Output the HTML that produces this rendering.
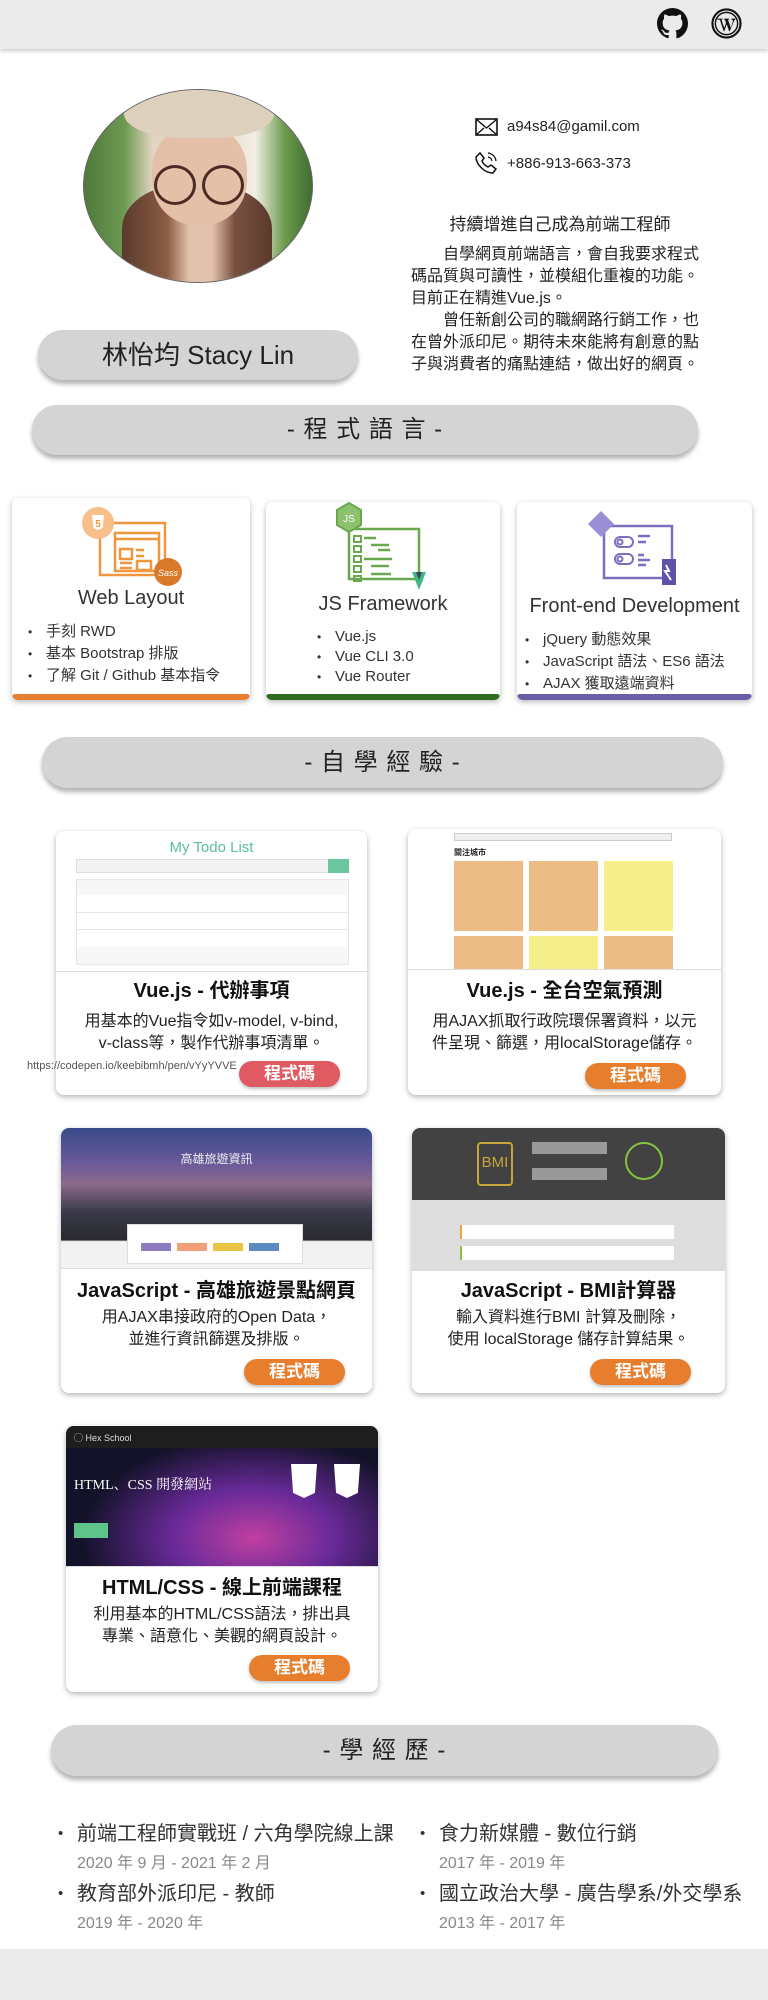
<!DOCTYPE html>
<html><head><meta charset="utf-8">
<style>
*{margin:0;padding:0;box-sizing:border-box}
body{width:768px;height:2000px;position:relative;background:#fff;font-family:"Liberation Sans","Noto Sans CJK TC",sans-serif;color:#222;overflow:hidden}
.a{position:absolute}
.pill{position:absolute;background:#d4d4d4;border-radius:30px;box-shadow:0 4px 5px rgba(0,0,0,.3);text-align:center;color:#222}
.card{position:absolute;background:#fff;border-radius:6px;box-shadow:0 2px 6px rgba(0,0,0,.28);overflow:hidden}
.bar{position:absolute;left:0;right:0;bottom:0;height:6px;border-radius:3px}
ul.l{position:absolute;list-style:none;font-size:15px;line-height:22px;color:#333}
ul.l li:before{content:"•";display:inline-block;width:18px;font-size:12px}
.pc{position:absolute;background:#fff;border-radius:8px;box-shadow:0 2px 6px rgba(0,0,0,.3);overflow:hidden;text-align:center}
.pc .im{position:absolute;left:0;right:0;top:0;border-bottom:1px solid #ddd;overflow:hidden}
.pc h3{position:absolute;left:0;right:0;font-size:20px;font-weight:bold;color:#111;line-height:24px;white-space:nowrap}
.pc p{position:absolute;left:0;right:0;font-size:16px;line-height:22px;color:#222;white-space:nowrap}
.btn{position:absolute;height:26px;width:101px;border-radius:13px;background:#e67e2e;color:#fff;font-size:17px;line-height:26px;text-align:center;font-weight:bold;box-shadow:0 2px 3px rgba(0,0,0,.25)}
.edu{position:absolute;font-size:20px;color:#333;line-height:24px;white-space:nowrap}
.edu span{display:block;font-size:16px;color:#888;margin-top:6px}
.edu:before{content:"•";position:absolute;left:-19px;font-size:15px}
</style></head><body>
<div class="a" style="left:0;top:0;width:768px;height:49px;background:#ebebeb;box-shadow:0 2px 4px rgba(0,0,0,.2)"></div>
<svg class="a" style="left:657px;top:8px" width="31" height="31" viewBox="0 0 16 16"><path fill="#111" d="M8 0C3.58 0 0 3.58 0 8c0 3.54 2.29 6.530 5.47 7.59.4.07.55-.17.55-.38v-1.33c-2.23.48-2.7-1.07-2.7-1.07-.36-.92-.89-1.17-.89-1.17-.73-.5.05-.49.05-.49.81.06 1.23.83 1.23.83.72 1.23 1.88.87 2.34.67.07-.52.28-.87.51-1.07-1.780-.2-3.64-.89-3.640-3.95 0-.87.31-1.59.82-2.15-.08-.2-.36-1.02.08-2.12 0 0 .67-.21 2.2.82a7.6 7.6 0 014 0c1.53-1.04 2.2-.82 2.2-.82.44 1.1.16 1.92.08 2.12.51.56.82 1.27.82 2.15 0 3.07-1.87 3.75-3.65 3.95.29.25.54.73.54 1.48v2.2c0 .21.15.46.55.38A8 8 0 0016 8c0-4.420-3.58-8-8-8z"/></svg>
<svg class="a" style="left:711px;top:8px" width="31" height="31" viewBox="0 0 32 32"><circle cx="16" cy="16" r="14.5" fill="none" stroke="#111" stroke-width="2.2"/><circle cx="16" cy="16" r="11.5" fill="none" stroke="#111" stroke-width="1.5"/><path fill="#111" d="M6.5 11h5.5v1h-1.3l3 8.5 1.8-5.2-1.1-3.3h-1v-1h5.4v1h-1.3l3 8.5 2-6.5c.5-1.8-.8-2.1-1.4-2.1V11h4v1c-.6.1-1.1.7-1.5 1.8L19.3 24h-.6l-2.5-7.2L13.7 24h-.6L9.2 12.2 8 12h-1.5z"/></svg>

<div class="a" style="left:83px;top:89px;width:230px;height:194px;border-radius:50%;overflow:hidden;border:1px solid #666;background:linear-gradient(90deg,#4d7a3a 0,#6e9a52 18%,#e0d5c0 30%,#e8dccb 60%,#f3efe6 75%,#6c9a4c 88%,#3f6e32 100%)">
 <div class="a" style="left:38px;top:95px;width:150px;height:110px;border-radius:40% 40% 10% 10%;background:linear-gradient(90deg,#5a3a2c,#8a5c44 30%,#e3c2ad 45%,#e3c2ad 60%,#7a5040 75%,#5a3a2c)"></div>
 <div class="a" style="left:68px;top:35px;width:95px;height:100px;border-radius:45%;background:#e4c0a8"></div>
 <div class="a" style="left:70px;top:75px;width:42px;height:40px;border-radius:50%;border:3px solid #4b2a22"></div>
 <div class="a" style="left:118px;top:75px;width:42px;height:40px;border-radius:50%;border:3px solid #4b2a22"></div>
 <div class="a" style="left:40px;top:-12px;width:150px;height:60px;border-radius:40%;background:#ddd0bc"></div>
</div>
<div class="pill" style="left:38px;top:330px;width:320px;height:50px;font-size:26px;line-height:50px;border-radius:25px">林怡均 Stacy Lin</div>

<svg class="a" style="left:475px;top:117px" width="23" height="20" viewBox="0 0 23 20"><rect x="1" y="2" width="21" height="16" fill="none" stroke="#111" stroke-width="1.6"/><path d="M1 2l10.5 9L22 2M1 18l8-7M22 18l-8-7" fill="none" stroke="#111" stroke-width="1.4"/></svg>
<div class="a" style="left:507px;top:118px;font-size:15px;color:#222">a94s84@gamil.com</div>
<svg class="a" style="left:474px;top:151px" width="24" height="24" viewBox="0 0 24 24"><path d="M6 2l4 5-2 3c1 2.5 3 4.5 6 6l3-2 5 4-3 4C10 22 2 13 2 6z" fill="none" stroke="#111" stroke-width="1.5"/><path d="M14 6a5 5 0 014 4M14 2a9 9 0 018 8" fill="none" stroke="#111" stroke-width="1.3"/></svg>
<div class="a" style="left:507px;top:155px;font-size:15px;color:#222">+886-913-663-373</div>
<div class="a" style="left:412px;top:210px;width:296px;text-align:center;font-size:17px;color:#222">持續增進自己成為前端工程師</div>
<div class="a" style="left:411px;top:244px;width:300px;font-size:16px;line-height:22px;color:#222;white-space:nowrap">
<div style="text-indent:2em">自學網頁前端語言，會自我要求程式<br>碼品質與可讀性，並模組化重複的功能。<br>目前正在精進Vue.js。</div>
<div style="text-indent:2em">曾任新創公司的職網路行銷工作，也<br>在曾外派印尼。期待未來能將有創意的點<br>子與消費者的痛點連結，做出好的網頁。</div>
</div>

<div class="pill" style="left:32px;top:405px;width:666px;height:50px;font-size:24px;line-height:50px;letter-spacing:1px">- 程 式 語 言 -</div>

<div class="card" style="left:12px;top:498px;width:238px;height:202px"><div class="bar" style="background:#e67e33"></div></div>
<div class="card" style="left:266px;top:502px;width:234px;height:198px"><div class="bar" style="background:#2e6b1e"></div></div>
<div class="card" style="left:517px;top:502px;width:235px;height:198px"><div class="bar" style="background:#6a5fa6"></div></div>

<svg class="a" style="left:81px;top:505px" width="102" height="84" viewBox="0 0 102 82"><rect x="19" y="17" width="65" height="52" fill="#fff" stroke="#f0973e" stroke-width="2.5"/><rect x="34" y="27" width="44" height="38" fill="none" stroke="#f0973e" stroke-width="2.5"/><line x1="34" y1="33" x2="78" y2="33" stroke="#f0973e" stroke-width="2.5"/><rect x="39" y="43" width="12" height="10" fill="none" stroke="#f0973e" stroke-width="2.5"/><path d="M55 44h8M55 50h8M39 57h12M39 62h12" stroke="#f0973e" stroke-width="2.5"/><rect x="56" y="55" width="14" height="9" fill="none" stroke="#f0973e" stroke-width="2.5"/><circle cx="17" cy="17" r="16" fill="#f7c08a"/><path d="M11 9h12l-1.5 13L17 24l-4.5-2z" fill="#fff"/><text x="17" y="21" font-size="10" text-anchor="middle" fill="#f0973e" font-weight="bold">5</text><circle cx="87" cy="66" r="14" fill="#d87a2a"/><text x="87" y="70" font-size="9" text-anchor="middle" fill="#fff" font-style="italic">Sass</text></svg>
<svg class="a" style="left:333px;top:502px" width="100" height="90" viewBox="0 0 100 90"><rect x="16" y="27" width="70" height="50" fill="#fff" stroke="#6aa84f" stroke-width="2.5"/><g stroke="#6aa84f" stroke-width="2" fill="none"><rect x="21" y="34" width="7" height="6"/><rect x="21" y="44" width="7" height="6"/><rect x="21" y="54" width="7" height="6"/><rect x="21" y="64" width="7" height="6"/><rect x="21" y="74" width="7" height="5"/></g><path d="M31 36h12M38 43h18M45 48h12M31 57h28M38 64h18M38 72h20" stroke="#6aa84f" stroke-width="2.5"/><path d="M4 8l12-7 12 7v15l-12 7-12-7z" fill="#8cc26e" stroke="#6aa84f" stroke-width="2"/><text x="16" y="20" font-size="10" text-anchor="middle" fill="#fff">JS</text><path d="M79 70h14l-7 18z" fill="#41b883"/><path d="M83 70h6l-3 8z" fill="#35495e"/></svg>
<svg class="a" style="left:586px;top:510px" width="100" height="78" viewBox="0 0 100 78"><rect x="18" y="16" width="68" height="52" fill="#fff" stroke="#7b6fc0" stroke-width="2.5"/><path d="M2 14l13-13 13 13-13 13z" fill="#9a8fd6"/><g fill="none" stroke="#7b6fc0" stroke-width="2"><rect x="29" y="27" width="18" height="10" rx="5"/><circle cx="34" cy="32" r="2.5"/><rect x="29" y="44" width="18" height="10" rx="5"/><circle cx="34" cy="49" r="2.5"/></g><path d="M52 26h12M52 32h8M52 45h6M52 50h12M52 55h8" stroke="#7b6fc0" stroke-width="2.5"/><rect x="76" y="49" width="14" height="26" fill="#5f52a8"/><path d="M80 55l3 6h-4l6 9" stroke="#fff" stroke-width="2" fill="none"/></svg>

<div class="a" style="left:12px;top:587px;width:238px;text-align:center;font-size:20px;color:#333">Web Layout</div>
<div class="a" style="left:266px;top:593px;width:234px;text-align:center;font-size:20px;color:#333">JS Framework</div>
<div class="a" style="left:517px;top:595px;width:235px;text-align:center;font-size:20px;color:#333">Front-end Development</div>
<ul class="l" style="left:28px;top:621px"><li>手刻 RWD</li><li>基本 Bootstrap 排版</li><li>了解 Git / Github 基本指令</li></ul>
<ul class="l" style="left:317px;top:627px;line-height:19px"><li>Vue.js</li><li>Vue CLI 3.0</li><li>Vue Router</li></ul>
<ul class="l" style="left:525px;top:629px"><li>jQuery 動態效果</li><li>JavaScript 語法、ES6 語法</li><li>AJAX 獲取遠端資料</li></ul>

<div class="pill" style="left:42px;top:737px;width:681px;height:51px;font-size:24px;line-height:51px;letter-spacing:1px">- 自 學 經 驗 -</div>

<div class="pc" style="left:56px;top:831px;width:311px;height:264px">
 <div class="im" style="height:141px;background:#fff">
  <div class="a" style="left:0;right:0;top:8px;font-size:15px;color:#5bbf9a">My Todo List</div>
  <div class="a" style="left:20px;top:28px;width:273px;height:14px;background:#f3f3f3;border:1px solid #ddd"></div>
  <div class="a" style="left:272px;top:28px;width:21px;height:14px;background:#6cc6a0"></div>
  <div class="a" style="left:20px;top:48px;width:273px;height:86px;background:#f7f7f7;border:1px solid #e6e6e6"></div>
  <div class="a" style="left:21px;top:64px;width:271px;height:52px;background:#fff"></div>
  <div class="a" style="left:21px;top:81px;width:271px;height:1px;background:#e6e6e6"></div>
  <div class="a" style="left:21px;top:98px;width:271px;height:1px;background:#e6e6e6"></div>
 </div>
 <h3 style="top:148px">Vue.js - 代辦事項</h3><p style="top:180px">用基本的Vue指令如v-model, v-bind,<br>v-class等，製作代辦事項清單。</p>
</div>
<div class="a" style="left:27px;top:1060px;font-size:11px;color:#555">https://codepen.io/keebibmh/pen/vYyYVVE</div>
<div class="btn" style="left:239px;top:1061px;background:#e05a62">程式碼</div>

<div class="pc" style="left:408px;top:829px;width:313px;height:266px">
 <div class="im" style="height:141px;background:#fff">
  <div class="a" style="left:46px;top:4px;width:218px;height:8px;background:#eee;border:1px solid #ccc"></div>
  <div class="a" style="left:46px;top:18px;font-size:8px;font-weight:bold">關注城市</div>
  <div class="a" style="left:46px;top:32px;width:69px;height:70px;background:#ebbc84"></div>
  <div class="a" style="left:121px;top:32px;width:69px;height:70px;background:#ebbc84"></div>
  <div class="a" style="left:196px;top:32px;width:69px;height:70px;background:#f5ef8a"></div>
  <div class="a" style="left:46px;top:107px;width:69px;height:40px;background:#ebbc84"></div>
  <div class="a" style="left:121px;top:107px;width:69px;height:40px;background:#f5ef8a"></div>
  <div class="a" style="left:196px;top:107px;width:69px;height:40px;background:#ebbc84"></div>
 </div>
 <h3 style="top:150px">Vue.js - 全台空氣預測</h3><p style="top:182px">用AJAX抓取行政院環保署資料，以元<br>件呈現、篩選，用localStorage儲存。</p>
</div>
<div class="btn" style="left:585px;top:1063px">程式碼</div>

<div class="pc" style="left:61px;top:1128px;width:311px;height:265px">
 <div class="im" style="height:141px;background:linear-gradient(180deg,#3a4a8a 0,#6a5a9a 25%,#8a6a8a 40%,#3a3a4a 60%,#2a2a30 80%,#f2f2f2 81%)">
  <div class="a" style="left:0;right:0;top:22px;font-size:12px;color:#eee">高雄旅遊資訊</div>
  <div class="a" style="left:66px;top:96px;width:176px;height:40px;background:#fff;border:1px solid #ddd"></div>
  <div class="a" style="left:80px;top:115px;width:30px;height:8px;background:#8e7cc3"></div>
  <div class="a" style="left:116px;top:115px;width:30px;height:8px;background:#f0a078"></div>
  <div class="a" style="left:152px;top:115px;width:30px;height:8px;background:#e9c545"></div>
  <div class="a" style="left:188px;top:115px;width:30px;height:8px;background:#5a8cc0"></div>
 </div>
 <h3 style="top:151px">JavaScript - 高雄旅遊景點網頁</h3><p style="top:179px">用AJAX串接政府的Open Data，<br>並進行資訊篩選及排版。</p>
</div>
<div class="btn" style="left:244px;top:1359px">程式碼</div>

<div class="pc" style="left:412px;top:1128px;width:313px;height:265px">
 <div class="im" style="height:143px;background:#ddd">
  <div class="a" style="left:0;right:0;top:0;height:72px;background:#424242"></div>
  <div class="a" style="left:65px;top:14px;width:36px;height:44px;border:2px solid #c9a43a;border-radius:4px;color:#c9a43a;font-size:15px;line-height:38px">BMI</div>
  <div class="a" style="left:120px;top:14px;width:75px;height:12px;background:#999"></div>
  <div class="a" style="left:120px;top:40px;width:75px;height:12px;background:#999"></div>
  <div class="a" style="left:213px;top:14px;width:38px;height:38px;border:2px solid #86c440;border-radius:50%"></div>
  <div class="a" style="left:48px;top:97px;width:214px;height:14px;background:#fff;border-left:2px solid #f0a040"></div>
  <div class="a" style="left:48px;top:118px;width:214px;height:14px;background:#fff;border-left:2px solid #86c440"></div>
 </div>
 <h3 style="top:151px">JavaScript - BMI計算器</h3><p style="top:179px">輸入資料進行BMI 計算及刪除，<br>使用 localStorage 儲存計算結果。</p>
</div>
<div class="btn" style="left:590px;top:1359px">程式碼</div>

<div class="pc" style="left:66px;top:1426px;width:312px;height:266px">
 <div class="im" style="height:141px;background:radial-gradient(ellipse at 60% 80%,#c040a0 0,#6a2a9a 30%,#121228 65%),#111">
  <div class="a" style="left:0;right:0;top:0;height:22px;background:#1e1e1e"></div>
  <div class="a" style="left:8px;top:5px;font-size:9px;color:#ddd">◯ Hex School</div>
  <div class="a" style="left:8px;top:48px;font-size:14px;color:#fff;font-family:'Liberation Serif','Noto Serif CJK SC',serif">HTML、CSS 開發網站</div>
  <div class="a" style="left:8px;top:97px;width:34px;height:15px;background:#5fc48a"></div>
  <div class="a" style="left:225px;top:38px;width:26px;height:34px;background:#fff;clip-path:polygon(0 0,100% 0,92% 85%,50% 100%,8% 85%)"></div>
  <div class="a" style="left:268px;top:38px;width:26px;height:34px;background:#fff;clip-path:polygon(0 0,100% 0,92% 85%,50% 100%,8% 85%)"></div>
 </div>
 <h3 style="top:150px">HTML/CSS - 線上前端課程</h3><p style="top:178px">利用基本的HTML/CSS語法，排出具<br>專業、語意化、美觀的網頁設計。</p>
</div>
<div class="btn" style="left:249px;top:1655px">程式碼</div>

<div class="pill" style="left:51px;top:1725px;width:667px;height:51px;font-size:24px;line-height:51px;letter-spacing:1px">- 學 經 歷 -</div>

<div class="edu" style="left:77px;top:1822px">前端工程師實戰班 / 六角學院線上課<span>2020 年 9 月 - 2021 年 2 月</span></div>
<div class="edu" style="left:77px;top:1882px">教育部外派印尼 - 教師<span>2019 年 - 2020 年</span></div>
<div class="edu" style="left:439px;top:1822px">食力新媒體 - 數位行銷<span>2017 年 - 2019 年</span></div>
<div class="edu" style="left:439px;top:1882px">國立政治大學 - 廣告學系/外交學系<span>2013 年 - 2017 年</span></div>

<div class="a" style="left:0;top:1949px;width:768px;height:51px;background:#ebebeb"></div>
</body></html>
